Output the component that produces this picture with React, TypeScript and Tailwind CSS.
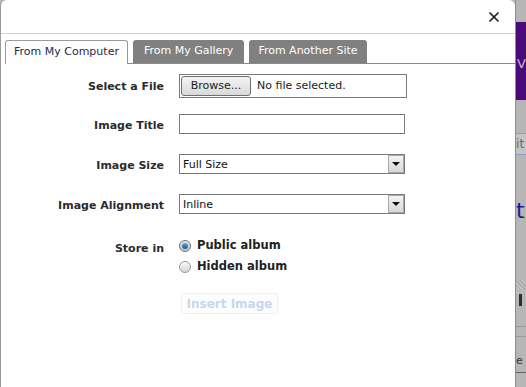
import { X } from "lucide-react";

const labelCls = "w-[178px] shrink-0 text-right font-bold text-[#2b2b2b] pr-[15px] pt-[5px]";

const SelectBox = ({ value }: { value: string }) => (
  <div className="w-[226px] h-[20px] border border-[#7a7a7a] flex items-center bg-white">
    <span className="flex-1 pl-[3px] text-[#111] leading-none">{value}</span>
    <span className="w-[16px] h-[18px] border border-[#a8a8a8] bg-gradient-to-b from-[#f4f4f4] to-[#d8d8d8] flex items-center justify-center">
      <span className="w-0 h-0 border-l-[4px] border-r-[4px] border-t-[4px] border-l-transparent border-r-transparent border-t-[#111]" />
    </span>
  </div>
);

const Radio = ({ checked, label }: { checked?: boolean; label: string }) => (
  <label className="flex items-center gap-[6px] h-[21px]">
    <span
      className={`w-[12px] h-[12px] rounded-full border flex items-center justify-center ${
        checked
          ? "border-[#6f6f6f] bg-gradient-to-b from-[#e8e8e8] to-[#c4c4c4]"
          : "border-[#9a9a9a] bg-gradient-to-b from-[#fafafa] to-[#d6d6d6]"
      }`}
    >
      {checked && (
        <span className="w-[6px] h-[6px] rounded-full bg-gradient-to-b from-[#4fb0e8] to-[#0a5a9c]" />
      )}
    </span>
    <span className="font-bold text-[#222] text-[11.5px]">{label}</span>
  </label>
);

const App = () => {
  return (
    <div
      className="w-[526px] h-[387px] flex bg-[#b6b6b6] overflow-hidden text-[11px]"
      style={{ fontFamily: '"DejaVu Sans", Tahoma, sans-serif' }}
    >
      {/* Dialog */}
      <div className="w-[519px] h-full bg-white border-l border-[#9a9a9a] rounded-t-[6px] flex flex-col">
        {/* Header */}
        <div className="h-[34px] shrink-0 border-b border-[#cfcfcf] flex items-center justify-end pr-[13px]">
          <X size={16} strokeWidth={2.6} className="text-[#1e1e1e]" />
        </div>

        {/* Tabs */}
        <div className="mt-[6px] ml-[4px] h-[24px] flex items-end gap-[5px] border-b border-[#8a8a8a]">
          <div className="h-[24px] px-[8px] -mb-px bg-white border border-b-0 border-[#9a9a9a] rounded-t-[3px] flex items-center text-[#2a2a4a]">
            From My Computer
          </div>
          <div className="h-[23px] px-[11px] bg-[#808080] rounded-t-[3px] flex items-center text-white">
            From My Gallery
          </div>
          <div className="h-[23px] px-[9px] bg-[#808080] rounded-t-[3px] flex items-center text-white">
            From Another Site
          </div>
        </div>

        {/* Form */}
        <div className="flex flex-col mt-[10px]">
          <div className="flex items-center h-[24px]">
            <div className={`${labelCls} !pt-[3px]`}>Select a File</div>
            <div className="w-[228px] h-[24px] border border-[#7a7a7a] flex items-center px-[1px]">
              <span className="w-[70px] h-[20px] border border-[#707070] rounded-[3px] bg-gradient-to-b from-[#f4f4f4] to-[#d9d9d9] flex items-center justify-center text-[#1a1a1a]">
                Browse...
              </span>
              <span className="ml-[6px] text-[#1a1a1a]">No file selected.</span>
            </div>
          </div>

          <div className="flex items-center h-[20px] mt-[16px]">
            <div className={labelCls}>Image Title</div>
            <div className="w-[226px] h-[20px] border border-[#7a7a7a]" />
          </div>

          <div className="flex items-center h-[20px] mt-[20px]">
            <div className={labelCls}>Image Size</div>
            <SelectBox value="Full Size" />
          </div>

          <div className="flex items-center h-[20px] mt-[20px]">
            <div className={labelCls}>Image Alignment</div>
            <SelectBox value="Inline" />
          </div>

          <div className="flex mt-[21px]">
            <div className={`${labelCls} !pt-[6px]`}>Store in</div>
            <div className="flex flex-col">
              <Radio checked label="Public album" />
              <Radio label="Hidden album" />
            </div>
          </div>

          <div className="flex mt-[16px]">
            <div className="w-[180px] shrink-0" />
            <div className="w-[97px] h-[21px] border border-[#f0f0f0] rounded-[3px] bg-[#fdfdfd] flex items-center justify-center font-bold text-[12px] text-[#c6d7ee]">
              Insert Image
            </div>
          </div>
        </div>
      </div>

      {/* Page behind */}
      <div className="flex-1 h-full border-l border-[#8c8c8c] flex flex-col">
        <div className="h-[22px]" />
        <div className="h-[78px] bg-[#4a0a78] flex items-center text-[#c8b8d8] text-[13px] pl-[1px] pt-[6px]">
          V
        </div>
        <div className="h-[33px]" />
        <div className="h-[22px] border-y border-[#8aa0c8] bg-[#c4c4c4] text-[#666] text-[12px] leading-[20px]">
          it
        </div>
        <div className="h-[43px]" />
        <div className="text-[#1a1aa0] text-[22px] leading-[26px]">t</div>
        <div className="h-[56px]" />
        <div className="h-[14px] bg-[repeating-linear-gradient(45deg,#a8a8a8_0,#a8a8a8_1px,#c0c0c0_1px,#c0c0c0_3px)]" />
        <div className="h-[12px] w-[3px] ml-[3px] bg-[#3a2a2a]" />
        <div className="h-[20px]" />
        <div className="h-[10px] border-t border-[#999]" />
        <div className="h-[20px] border-t border-[#999]" />
        <div className="text-[11px] leading-[10px] text-[#333]">e</div>
        <div className="h-[6px]" />
        <div className="border-t border-[#666]" />
      </div>
    </div>
  );
};

export default App;
